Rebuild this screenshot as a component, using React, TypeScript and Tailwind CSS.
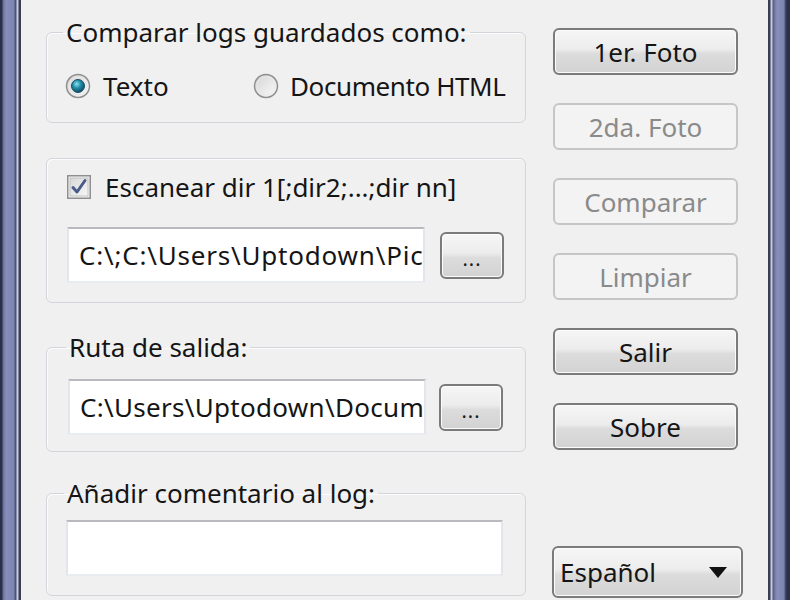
import React from "react";

const font = "font-['Noto_Sans','Open_Sans','DejaVu_Sans',sans-serif]";

const RadioDot = ({ checked }: { checked: boolean }) => (
  <svg width="26" height="26" viewBox="0 0 26 26" className="shrink-0">
    <defs>
      <linearGradient id="rOuter" x1="0" y1="0" x2="1" y2="1">
        <stop offset="0" stopColor="#d4d4d4" />
        <stop offset="1" stopColor="#fbfbfb" />
      </linearGradient>
      <radialGradient id="rDot" cx="0.4" cy="0.35" r="0.7">
        <stop offset="0" stopColor="#8ee3f0" />
        <stop offset="0.45" stopColor="#1f8ea8" />
        <stop offset="1" stopColor="#12405a" />
      </radialGradient>
    </defs>
    <circle cx="13" cy="13" r="11.5" fill="url(#rOuter)" stroke="#8e8f8f" strokeWidth="1.5" />
    <circle cx="13" cy="13" r="9" fill="none" stroke="#e8e8e8" strokeWidth="1" />
    {checked && <circle cx="13" cy="13" r="6.5" fill="url(#rDot)" stroke="#1b4d66" strokeWidth="1" />}
  </svg>
);

const CheckBox = () => (
  <svg width="24" height="24" viewBox="0 0 24 24" className="shrink-0">
    <defs>
      <linearGradient id="cbIn" x1="0" y1="0" x2="1" y2="1">
        <stop offset="0" stopColor="#d8d8d8" />
        <stop offset="1" stopColor="#f7f7f7" />
      </linearGradient>
    </defs>
    <rect x="0.75" y="0.75" width="22.5" height="22.5" fill="#f4f4f4" stroke="#8e8f8f" strokeWidth="1.5" />
    <rect x="3" y="3" width="18" height="18" fill="url(#cbIn)" stroke="#c2c2c2" strokeWidth="1" />
    <path d="M6 12.5 L10 17 L18 5.5" fill="none" stroke="#4a5c8a" strokeWidth="3" strokeLinecap="round" strokeLinejoin="round" />
  </svg>
);

const WinButton = ({ label, disabled }: { label: string; disabled?: boolean }) => (
  <div
    className={
      disabled
        ? "h-[47px] w-[185px] flex items-center justify-center rounded-[6px] border-2 border-[#c4c6c8] bg-[#f3f3f3] text-[26px] text-[#8a8a8a]"
        : "h-[47px] w-[185px] flex items-center justify-center rounded-[6px] border-2 border-[#7b7b7b] bg-[linear-gradient(to_bottom,#f6f6f6_0%,#ececec_45%,#dcdcdc_55%,#d2d2d2_100%)] shadow-[inset_0_0_0_1px_#fbfbfb] text-[26px] text-[#151515]"
    }
  >
    {label}
  </div>
);

const DotsButton = () => (
  <div className="h-[47px] w-[64px] shrink-0 flex items-end justify-center pb-[8px] rounded-[6px] border-2 border-[#7b7b7b] bg-[linear-gradient(to_bottom,#f6f6f6_0%,#ececec_45%,#dcdcdc_55%,#d2d2d2_100%)] shadow-[inset_0_0_0_1px_#fbfbfb] text-[20px] leading-none text-[#1a1a1a] tracking-[1px]">
    ...
  </div>
);

const TextBox = ({ value, className }: { value: string; className: string }) => (
  <div
    className={`${className} h-[56px] shrink-0 flex items-center overflow-hidden whitespace-nowrap bg-white border-2 border-t-[#b8bac0] border-x-[#e3e5ea] border-b-[#e8ecf0] pl-[10px] pr-[2px] text-[26px] text-[#151515]`}
  >
    {value}
  </div>
);

export default function App() {
  return (
    <div className={`w-[790px] h-[600px] flex overflow-hidden bg-[#f0f0f0] ${font} leading-[30px]`}>
      <div className="w-[21px] h-full shrink-0 bg-[linear-gradient(to_right,#2b3049_0px,#2b3049_2px,#676e98_3px,#878ebb_6px,#7d84af_14px,#4e5478_15px,#4e5478_16px,#c9ccd8_17px,#c9ccd8_18px,#3a3f58_19px,#3a3f58_21px)]" />

      <div className="flex-1 flex pl-[25px]">
        <div className="w-[480px] flex flex-col">
          <fieldset className="mt-[17px] rounded-[6px] border border-[#d2d6da] shadow-[inset_1px_1px_0_#fcfcfc] px-[18px] pt-[24px] pb-[21px]">
            <legend className="ml-[-2px] px-[3px] text-[26px] text-[#151515]">Comparar logs guardados como:</legend>
            <div className="flex items-center h-[30px] whitespace-nowrap">
              <div className="flex items-center gap-[12px] w-[188px]">
                <RadioDot checked />
                <span className="text-[26px] text-[#151515]">Texto</span>
              </div>
              <div className="flex items-center gap-[11px]">
                <RadioDot checked={false} />
                <span className="text-[26px] tracking-[-0.4px] text-[#151515]">Documento HTML</span>
              </div>
            </div>
          </fieldset>

          <div className="mt-[35px] rounded-[6px] border border-[#d2d6da] shadow-[inset_1px_1px_0_#fcfcfc] pl-[20px] pt-[13px] pb-[19px]">
            <div className="flex items-center gap-[14px] h-[30px]">
              <CheckBox />
              <span className="text-[26px] text-[#151515]">Escanear dir 1[;dir2;...;dir nn]</span>
            </div>
            <div className="mt-[25px] flex items-center gap-[15px]">
              <TextBox value="C:\;C:\Users\Uptodown\Pic" className="w-[358px] tracking-[0.8px]" />
              <DotsButton />
            </div>
          </div>

          <fieldset className="mt-[29px] rounded-[6px] border border-[#d2d6da] shadow-[inset_1px_1px_0_#fcfcfc] pl-[21px] pt-[17px] pb-[16px]">
            <legend className="ml-[-2px] px-[3px] text-[26px] text-[#151515]">Ruta de salida:</legend>
            <div className="flex items-center gap-[13px]">
              <TextBox value="C:\Users\Uptodown\Docum" className="w-[358px] tracking-[0.3px]" />
              <DotsButton />
            </div>
          </fieldset>

          <fieldset className="mt-[26px] rounded-[6px] border border-[#d2d6da] shadow-[inset_1px_1px_0_#fcfcfc] pl-[19px] pt-[12px] pb-[19px]">
            <legend className="ml-[-2px] px-[3px] text-[26px] text-[#151515]">Añadir comentario al log:</legend>
            <TextBox value="" className="w-[437px]" />
          </fieldset>
        </div>

        <div className="ml-[27px] w-[191px] flex flex-col items-start pt-[28px] gap-[28px]">
          <WinButton label="1er. Foto" />
          <WinButton label="2da. Foto" disabled />
          <WinButton label="Comparar" disabled />
          <WinButton label="Limpiar" disabled />
          <WinButton label="Salir" />
          <WinButton label="Sobre" />
          <div className="mt-[68px] ml-[-1px] h-[52px] w-[191px] flex items-center justify-between pl-[6px] pr-[14px] rounded-[6px] border-2 border-[#7b7b7b] bg-[linear-gradient(to_bottom,#f6f6f6_0%,#ececec_45%,#dcdcdc_55%,#d2d2d2_100%)] shadow-[inset_0_0_0_1px_#fbfbfb] text-[26px] text-[#151515]">
            <span>Español</span>
            <svg width="18" height="11" viewBox="0 0 18 11">
              <path d="M0 0 H18 L9 11 Z" fill="#111" />
            </svg>
          </div>
        </div>
      </div>

      <div className="w-[22px] h-full shrink-0 bg-[linear-gradient(to_right,#3a3f58_0px,#3a3f58_2px,#c9ccd8_3px,#c9ccd8_4px,#4e5478_5px,#6a719a_6px,#878ebb_9px,#7d84af_16px,#4e5478_17px,#2b3049_19px,#2b3049_22px)]" />
    </div>
  );
}
